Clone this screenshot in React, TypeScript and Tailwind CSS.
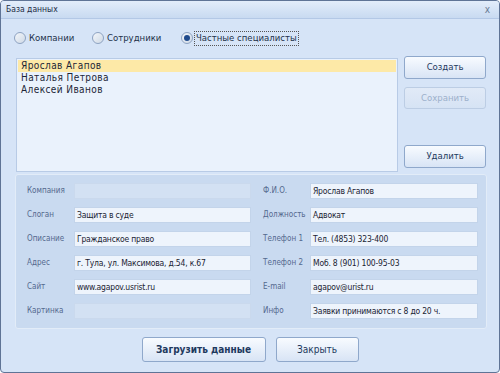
import React from 'react';

const leftFields = [
  { label: 'Компания', value: '', disabled: true },
  { label: 'Слоган', value: 'Защита в суде' },
  { label: 'Описание', value: 'Гражданское право' },
  { label: 'Адрес', value: 'г. Тула, ул. Максимова, д.54, к.67' },
  { label: 'Сайт', value: 'www.agapov.usrist.ru' },
  { label: 'Картинка', value: '', disabled: true },
];

const rightFields = [
  { label: 'Ф.И.О.', value: 'Ярослав Агапов' },
  { label: 'Должность', value: 'Адвокат' },
  { label: 'Телефон 1', value: 'Тел. (4853) 323-400' },
  { label: 'Телефон 2', value: 'Моб. 8 (901) 100-95-03' },
  { label: 'E-mail', value: 'agapov@urist.ru' },
  { label: 'Инфо', value: 'Заявки принимаются с 8 до 20 ч.' },
];

const people = ['Ярослав Агапов', 'Наталья Петрова', 'Алексей Иванов'];

function Radio({ label, checked, focused }: { label: string; checked?: boolean; focused?: boolean }) {
  return (
    <div className="flex items-center gap-[1px]">
      <span className="w-[12px] h-[12px] rounded-full border border-[#8ea3c2] bg-gradient-to-br from-[#f3f6fa] to-[#cfd9e6] flex items-center justify-center">
        {checked && <span className="w-[6px] h-[6px] rounded-full bg-[#1f4a8c]" />}
      </span>
      <span
        className={
          'h-[15px] flex items-center px-[1px] text-[9.5px] text-[#22314a] whitespace-nowrap border ' +
          (focused ? 'border-dotted border-[#555]' : 'border-transparent')
        }
      >
        {label}
      </span>
    </div>
  );
}

function Btn({ children, disabled, bold, className = '' }: { children: React.ReactNode; disabled?: boolean; bold?: boolean; className?: string }) {
  return (
    <div
      className={
        'flex items-center justify-center rounded-[3px] border bg-gradient-to-b whitespace-nowrap ' +
        (disabled
          ? 'border-[#bccde4] from-[#e1eaf7] to-[#d6e3f4] text-[#9cb0cb] '
          : 'border-[#8fa8cb] from-[#f8fbff] to-[#d8e4f5] text-[#1e395e] ') +
        (bold ? 'font-bold ' : '') +
        className
      }
    >
      {children}
    </div>
  );
}

function Field({ label, value, disabled, labelW }: { label: string; value: string; disabled?: boolean; labelW: string }) {
  return (
    <div className="flex items-center h-[16px]">
      <span className={`${labelW} shrink-0 text-[8px] text-[#54698e] whitespace-nowrap`}>{label}</span>
      <div
        className={
          'flex-1 h-[16px] flex items-center px-[2px] border text-[8.5px] tracking-[-0.2px] text-[#1a2333] whitespace-nowrap overflow-hidden ' +
          (disabled ? 'bg-[#d3e1f3] border-[#cad9ed]' : 'bg-[#eef4fc] border-[#c3d4ea]')
        }
      >
        {value}
      </div>
    </div>
  );
}

export default function App() {
  return (
    <div
      className="w-[500px] h-[373px] bg-white overflow-hidden"
      style={{ fontFamily: '"DejaVu Sans Condensed", "Liberation Sans", sans-serif' }}
    >
      <div className="w-full h-full flex flex-col rounded-[4px] border border-[#5f7496] bg-[#d6e4f7] overflow-hidden">
        {/* Title */}
        <div className="h-[18px] shrink-0 flex items-center justify-between pl-[5px] pr-[9px] bg-gradient-to-b from-[#e3edfa] to-[#c8daf1] border-b border-[#b3c8e6] text-[8.5px] text-[#1e2d45]">
          <span>База данных</span>
          <span className="text-[10px] text-[#6a7b94] leading-none">x</span>
        </div>

        <div className="flex-1 flex flex-col px-[13px] pt-[11px] text-[11px] text-[#1c2536]">
          {/* Radios */}
          <div className="flex items-center h-[16px]">
            <div className="w-[78px]">
              <Radio label="Компании" />
            </div>
            <div className="w-[89px]">
              <Radio label="Сотрудники" />
            </div>
            <Radio label="Частные специалисты" checked focused />
          </div>

          {/* List + buttons */}
          <div className="flex mt-[12px] gap-[6px]">
            <div className="ml-[2px] w-[383px] h-[114px] border border-[#b8cbe6] bg-[#eaf2fc] p-[1px] flex flex-col">
              {people.map((p, i) => (
                <div key={p} className={`h-[12px] leading-[12px] px-[3px] text-[10px] tracking-[0.4px] ${i === 0 ? 'bg-[#fde9a7]' : ''}`}>
                  {p}
                </div>
              ))}
            </div>
            <div className="flex flex-col w-[82px] -mt-[2px] text-[9.5px]">
              <Btn className="h-[23px]">Создать</Btn>
              <Btn disabled className="h-[22px] mt-[8px]">Сохранить</Btn>
              <Btn className="h-[23px] mt-[36px]">Удалить</Btn>
            </div>
          </div>

          {/* Details panel */}
          <div className="mt-[2px] ml-[1px] w-[472px] h-[155px] rounded-[3px] border border-[#e2ecf8] bg-[#c9daf0] flex gap-[12px] pl-[11px] pt-[8px]">
            <div className="w-[224px] flex flex-col gap-[8px]">
              {leftFields.map((f) => (
                <Field key={f.label} {...f} labelW="w-[47px]" />
              ))}
            </div>
            <div className="w-[215px] flex flex-col gap-[8px]">
              {rightFields.map((f) => (
                <Field key={f.label} {...f} labelW="w-[47px]" />
              ))}
            </div>
          </div>

          {/* Bottom buttons */}
          <div className="flex justify-center gap-[10px] mt-[8px]">
            <Btn bold className="w-[124px] h-[25px] text-[10px]">Загрузить данные</Btn>
            <Btn className="w-[83px] h-[25px] text-[10px]">Закрыть</Btn>
          </div>
        </div>
      </div>
    </div>
  );
}
